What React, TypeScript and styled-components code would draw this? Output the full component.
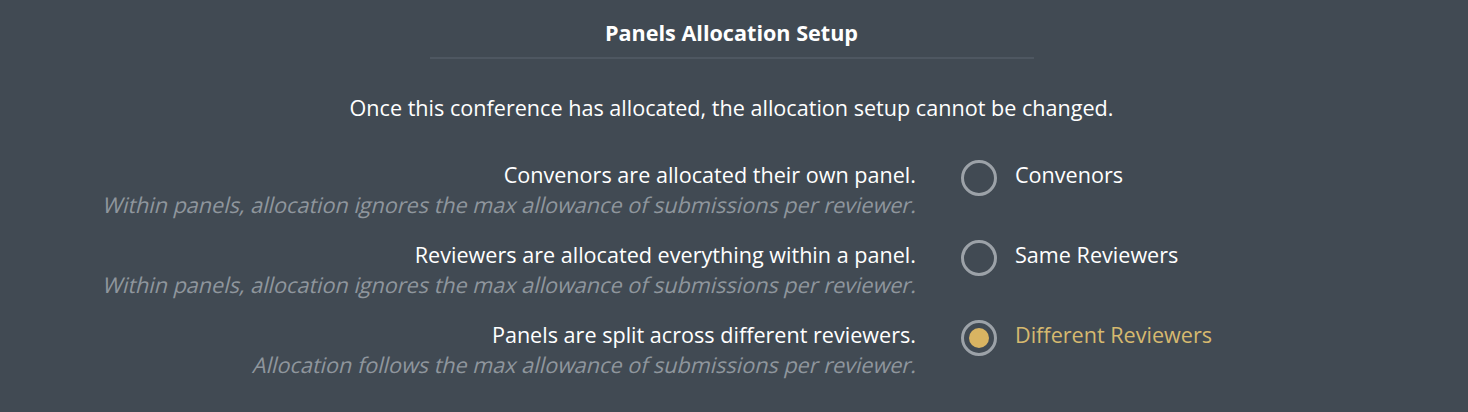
import React from "react";
import styled, { createGlobalStyle } from "styled-components";

const GlobalStyle = createGlobalStyle`
  html, body {
    margin: 0;
    padding: 0;
    background: #414a53;
  }
  body {
    font-family: "Open Sans", "Noto Sans", sans-serif;
    color: #ffffff;
  }
`;

const Page = styled.div`
  width: 1463px;
  height: 412px;
  background: #414a53;
  display: flex;
  flex-direction: column;
  align-items: center;
  padding-top: 19px;
  box-sizing: border-box;
`;

const Title = styled.h2`
  margin: 0;
  font-size: 21.6px;
  line-height: 28px;
  font-weight: 700;
  color: #ffffff;
`;

const Divider = styled.div`
  width: 604px;
  height: 2px;
  margin-top: 10px;
  background: #4e5761;
`;

const Notice = styled.p`
  margin: 34px 0 0;
  font-size: 21.6px;
  line-height: 30px;
  color: #ffffff;
`;

const Options = styled.div`
  align-self: stretch;
  display: flex;
  flex-direction: column;
  gap: 20px;
  margin-top: 37px;
`;

const Row = styled.div`
  display: flex;
  align-items: flex-start;
`;

const Description = styled.div`
  width: 916px;
  flex: none;
  text-align: right;
  font-size: 21.6px;
  line-height: 30px;
`;

const Main = styled.div`
  color: #ffffff;
`;

const Note = styled.div`
  color: #8f969d;
`;

const Slanted = styled.span`
  display: inline-block;
  transform: skewX(-14deg);
  transform-origin: 50% 22px;
`;

const Radio = styled.span<{ $checked: boolean }>`
  flex: none;
  margin-left: 45px;
  margin-top: 0px;
  width: 36px;
  height: 36px;
  box-sizing: border-box;
  border: 3px solid #9ca2a8;
  border-radius: 50%;
  display: flex;
  align-items: center;
  justify-content: center;

  &::after {
    content: "";
    display: ${(p) => (p.$checked ? "block" : "none")};
    width: 20px;
    height: 20px;
    border-radius: 50%;
    background: #d9b462;
  }
`;

const OptionLabel = styled.span<{ $checked: boolean }>`
  margin-left: 18px;
  font-size: 21.6px;
  line-height: 30px;
  color: ${(p) => (p.$checked ? "#d6b96f" : "#ffffff")};
`;

const options = [
  {
    main: "Convenors are allocated their own panel.",
    note: "Within panels, allocation ignores the max allowance of submissions per reviewer.",
    label: "Convenors",
    checked: false,
  },
  {
    main: "Reviewers are allocated everything within a panel.",
    note: "Within panels, allocation ignores the max allowance of submissions per reviewer.",
    label: "Same Reviewers",
    checked: false,
  },
  {
    main: "Panels are split across different reviewers.",
    note: "Allocation follows the max allowance of submissions per reviewer.",
    label: "Different Reviewers",
    checked: true,
  },
];

export default function App() {
  return (
    <>
      <GlobalStyle />
      <Page>
        <Title>Panels Allocation Setup</Title>
        <Divider />
        <Notice>
          Once this conference has allocated, the allocation setup cannot be changed.
        </Notice>
        <Options>
          {options.map((o) => (
            <Row key={o.label}>
              <Description>
                <Main>{o.main}</Main>
                <Note>
                  <Slanted>{o.note}</Slanted>
                </Note>
              </Description>
              <Radio $checked={o.checked} />
              <OptionLabel $checked={o.checked}>{o.label}</OptionLabel>
            </Row>
          ))}
        </Options>
      </Page>
    </>
  );
}
